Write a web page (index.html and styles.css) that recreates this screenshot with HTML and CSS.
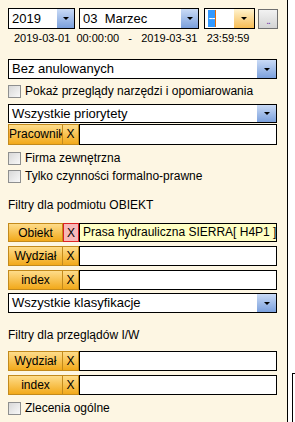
FILE: index.html
```html
<!DOCTYPE html>
<html>
  <head>
    <meta content="text/html; charset=utf-8" http-equiv="content-type">
    <title>Filtry</title>
    <link rel="stylesheet" href="styles.css">
  </head>
  <body>
    <div class="panel">
      <div class="daterow">
        <div class="sel year"><span class="val">2019</span><span class="btn blue"><i class="arr"></i></span></div>
        <div class="sel month"><span class="val">03&nbsp; Marzec</span><span class="btn blue"><i class="arr"></i></span></div>
        <div class="sel hour"><span class="val"><span class="hl">--</span><span class="caret"></span></span><span class="btn orange"><i class="arr"></i></span></div>
        <div class="dots">..</div>
      </div>
      <div class="range">2019-03-01  00:00:00   -   2019-03-31   23:59:59</div>

      <div class="sel wide first"><span class="val">Bez anulowanych</span><span class="btn blue"><i class="arr"></i></span></div>
      <label class="chk c1"><span class="box"></span>Pokaż przeglądy narzędzi i opomiarowania</label>
      <div class="sel wide prio"><span class="val">Wszystkie priorytety</span><span class="btn blue"><i class="arr"></i></span></div>
      <div class="pick small">
        <span class="pbtn">Pracownik</span><span class="x">X</span><span class="inp"></span>
      </div>
      <label class="chk c2"><span class="box"></span>Firma zewnętrzna</label>
      <label class="chk"><span class="box"></span>Tylko czynności formalno-prawne</label>

      <div class="head">Filtry dla podmiotu OBIEKT</div>
      <div class="pick p1">
        <span class="pbtn">Obiekt</span><span class="x red">X</span><span class="inp set">Prasa hydrauliczna SIERRA[ H4P1 ]</span>
      </div>
      <div class="pick">
        <span class="pbtn">Wydział</span><span class="x">X</span><span class="inp"></span>
      </div>
      <div class="pick">
        <span class="pbtn">index</span><span class="x">X</span><span class="inp"></span>
      </div>
      <div class="sel wide klas"><span class="val">Wszystkie klasyfikacje</span><span class="btn blue"><i class="arr"></i></span></div>

      <div class="head second">Filtry dla przeglądów I/W</div>
      <div class="pick p2">
        <span class="pbtn">Wydział</span><span class="x">X</span><span class="inp"></span>
      </div>
      <div class="pick">
        <span class="pbtn">index</span><span class="x">X</span><span class="inp"></span>
      </div>
      <label class="chk c3"><span class="box"></span>Zlecenia ogólne</label>
    </div>
    <div class="edge"></div>
  </body>
</html>
```
FILE: styles.css
```css
body {
    margin: 0;
    background: #fff;
    font-family: "Liberation Sans", Arial, sans-serif;
    color: #000;
    position: relative;
    height: 422px;
    overflow: hidden;
}

.panel {
    width: 288px;
    height: 422px;
    padding: 8px 0 0 8px;
    box-sizing: border-box;
    background: #fdf6e3;
    border-right: 1px solid #000;
}

/* top row: year / month / hour */
.daterow {
    display: flex;
    align-items: flex-start;
}

.sel {
    display: flex;
    height: 21px;
    box-sizing: border-box;
    border: 1px solid #000;
    background: #fff;
}
.sel .val {
    flex: 1;
    font-size: 13px;
    line-height: 19px;
    padding-left: 3px;
    white-space: nowrap;
    overflow: hidden;
}
.btn {
    width: 17px;
    display: flex;
    align-items: center;
    justify-content: center;
}
.btn.blue { background: linear-gradient(#cadbf6, #7ba0dc); }
.btn.orange { background: linear-gradient(#fff3cf, #f7bd55); width: 20px; }
.arr {
    width: 0;
    height: 0;
    border-left: 3px solid transparent;
    border-right: 3px solid transparent;
    border-top: 3px solid #000;
}

.year { width: 67px; }
.month { width: 120px; margin-left: 4px; }
.hour { width: 51px; margin-left: 5px; }
.hour .val { padding-left: 3px; display: flex; align-items: center; }
.hl {
    background: #3399ff;
    color: #fff;
    font-size: 12px;
    line-height: 17px;
    width: 7px;
    text-align: center;
    overflow: hidden;
    letter-spacing: -1px;
}
.caret {
    width: 1px;
    height: 17px;
    background: #e46c0a;
}
.dots {
    width: 20px;
    height: 20px;
    margin-left: 3px;
    margin-top: 1px;
    box-sizing: border-box;
    border: 1px solid #707070;
    background: linear-gradient(#f2f2f2, #d4d4d4);
    color: #6b2fa8;
    font-size: 10px;
    line-height: 22px;
    text-align: center;
    letter-spacing: -1px;
}

.range {
    font-size: 11px;
    line-height: 14px;
    margin: 2px 0 0 6px;
    white-space: pre;
}

.wide { width: 269px; height: 20px; }
.sel.wide .val { line-height: 18px; }
.sel.wide .btn { width: 19px; }
.sel.first { margin-top: 14px; }
.sel.prio { margin-top: 4px; height: 19px; }
.sel.prio .val { line-height: 17px; }
.sel.klas { margin-top: 3px; }

.chk {
    display: flex;
    align-items: center;
    font-size: 12px;
    height: 18px;
}
.chk.c1 { margin-top: 3px; }
.chk.c2 { margin-top: 4px; }
.chk.c3 { margin-top: 4px; }
.box {
    width: 11px;
    height: 11px;
    margin-right: 4px;
    border: 1px solid #8e8f8f;
    background: linear-gradient(135deg, #d8d8d8, #f8f8f8);
}

/* picker rows: button, clear, value */
.pick {
    display: flex;
    width: 269px;
    height: 20px;
    margin-top: 4px;
    font-size: 12px;
}
.pick.small { margin-top: 1px; height: 21px; }
.pick.p1 { margin-top: 11px; height: 19px; }
.pick.p2 { margin-top: 9px; }
.pbtn {
    width: 55px;
    box-sizing: border-box;
    border: 1px solid #c38a1c;
    background: linear-gradient(#fedc8a, #f2a91a);
    text-align: center;
    line-height: 18px;
}
.small .pbtn {
    text-align: left;
    overflow: hidden;
    white-space: nowrap;
    line-height: 19px;
}
.x {
    width: 16px;
    box-sizing: border-box;
    border: 1px solid #c38a1c;
    border-left: 0;
    background: linear-gradient(#fedc8a, #f2a91a);
    text-align: center;
    line-height: 18px;
}
.small .x { line-height: 19px; }
.x.red {
    background: #f7b8b8;
    border: 1px solid #d22;
}
.inp {
    flex: 1;
    box-sizing: border-box;
    border: 1px solid #000;
    background: #fff;
    line-height: 17px;
    padding-left: 3px;
    white-space: nowrap;
    overflow: hidden;
}
.inp.set { background: #ffffc4; }

.head {
    font-size: 12px;
    line-height: 14px;
    margin-top: 13px;
}
.head.second { margin-top: 15px; }

.edge {
    position: absolute;
    left: 292px;
    top: 373px;
    width: 3px;
    height: 49px;
    border-left: 1px solid #000;
    border-top: 1px solid #000;
}
```
